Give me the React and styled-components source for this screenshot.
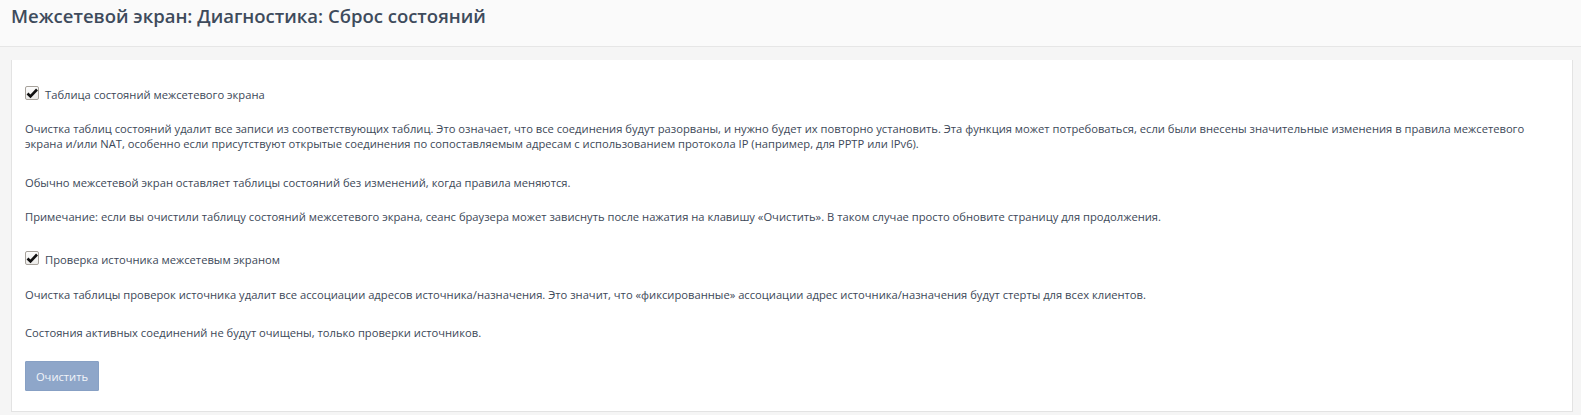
import styled, { createGlobalStyle } from "styled-components";

const GlobalStyle = createGlobalStyle`
  html, body {
    margin: 0;
    padding: 0;
    background: #f5f5f5;
    font-family: "Open Sans", "Noto Sans", sans-serif;
    color: #3c4858;
  }
`;

const Header = styled.header`
  height: 47px;
  background: #fafafa;
  border-bottom: 1px solid #e6e6e6;
  box-sizing: border-box;
  padding: 4px 11px 0;
`;
const Title = styled.h1`
  margin: 0;
  font-size: 18.5px;
  font-weight: 600;
  line-height: 24px;
  color: #3e4b5c;
`;
const Main = styled.main`
  padding: 13px 8px 0 11px;
`;
const Card = styled.section`
  background: #fff;
  border: 1px solid #e3e3e3;
  border-top: none;
  padding: 27px 14px 20px 13px;
`;
const CheckRow = styled.label`
  display: flex;
  align-items: center;
  gap: 6px;
  font-size: 11.2px;
  line-height: 16px;
  margin: ${(p) => p.$mt || 0}px 0 0;
`;
const Box = styled.span`
  width: 14px;
  height: 14px;
  box-sizing: border-box;
  border: 1px solid #a7a29b;
  border-radius: 2px;
  background: linear-gradient(#fdfdfd, #ecebe9);
  display: inline-flex;
  align-items: center;
  justify-content: center;
  margin-top: -4px;
`;
const Text = styled.p`
  margin: ${(p) => p.$mt || 0}px 0 0;
  font-size: 11.2px;
  line-height: 15px;
`;
const Button = styled.button`
  margin-top: 21px;
  height: 30px;
  width: 74px;
  border: 1px solid #87a0c4;
  border-radius: 1px;
  background: #8ea6c9;
  color: #f2f5fa;
  font-family: inherit;
  font-size: 11.2px;
  padding: 0;
`;

const Check = () => (
  <Box>
    <svg width="12" height="11" viewBox="0 0 12 11">
      <path d="M1.5 5.5 L4.5 8.5 L11 1.5" fill="none" stroke="#111" strokeWidth="2.6" />
    </svg>
  </Box>
);

export default function App() {
  return (
    <>
      <GlobalStyle />
      <Header>
        <Title>Межсетевой экран: Диагностика: Сброс состояний</Title>
      </Header>
      <Main>
        <Card>
          <CheckRow>
            <Check />
            Таблица состояний межсетевого экрана
          </CheckRow>
          <Text $mt={18}>
            Очистка таблиц состояний удалит все записи из соответствующих таблиц. Это означает, что все соединения будут разорваны, и нужно будет их повторно установить. Эта функция может потребоваться, если были внесены значительные изменения в правила межсетевого экрана и/или NAT, особенно если присутствуют открытые соединения по сопоставляемым адресам с использованием протокола IP (например, для PPTP или IPv6).
          </Text>
          <Text $mt={24}>Обычно межсетевой экран оставляет таблицы состояний без изменений, когда правила меняются.</Text>
          <Text $mt={19}>
            Примечание: если вы очистили таблицу состояний межсетевого экрана, сеанс браузера может зависнуть после нажатия на клавишу «Очистить». В таком случае просто обновите страницу для продолжения.
          </Text>
          <CheckRow $mt={28}>
            <Check />
            Проверка источника межсетевым экраном
          </CheckRow>
          <Text $mt={19}>
            Очистка таблицы проверок источника удалит все ассоциации адресов источника/назначения. Это значит, что «фиксированные» ассоциации адрес источника/назначения будут стерты для всех клиентов.
          </Text>
          <Text $mt={23}>Состояния активных соединений не будут очищены, только проверки источников.</Text>
          <Button>Очистить</Button>
        </Card>
      </Main>
    </>
  );
}
